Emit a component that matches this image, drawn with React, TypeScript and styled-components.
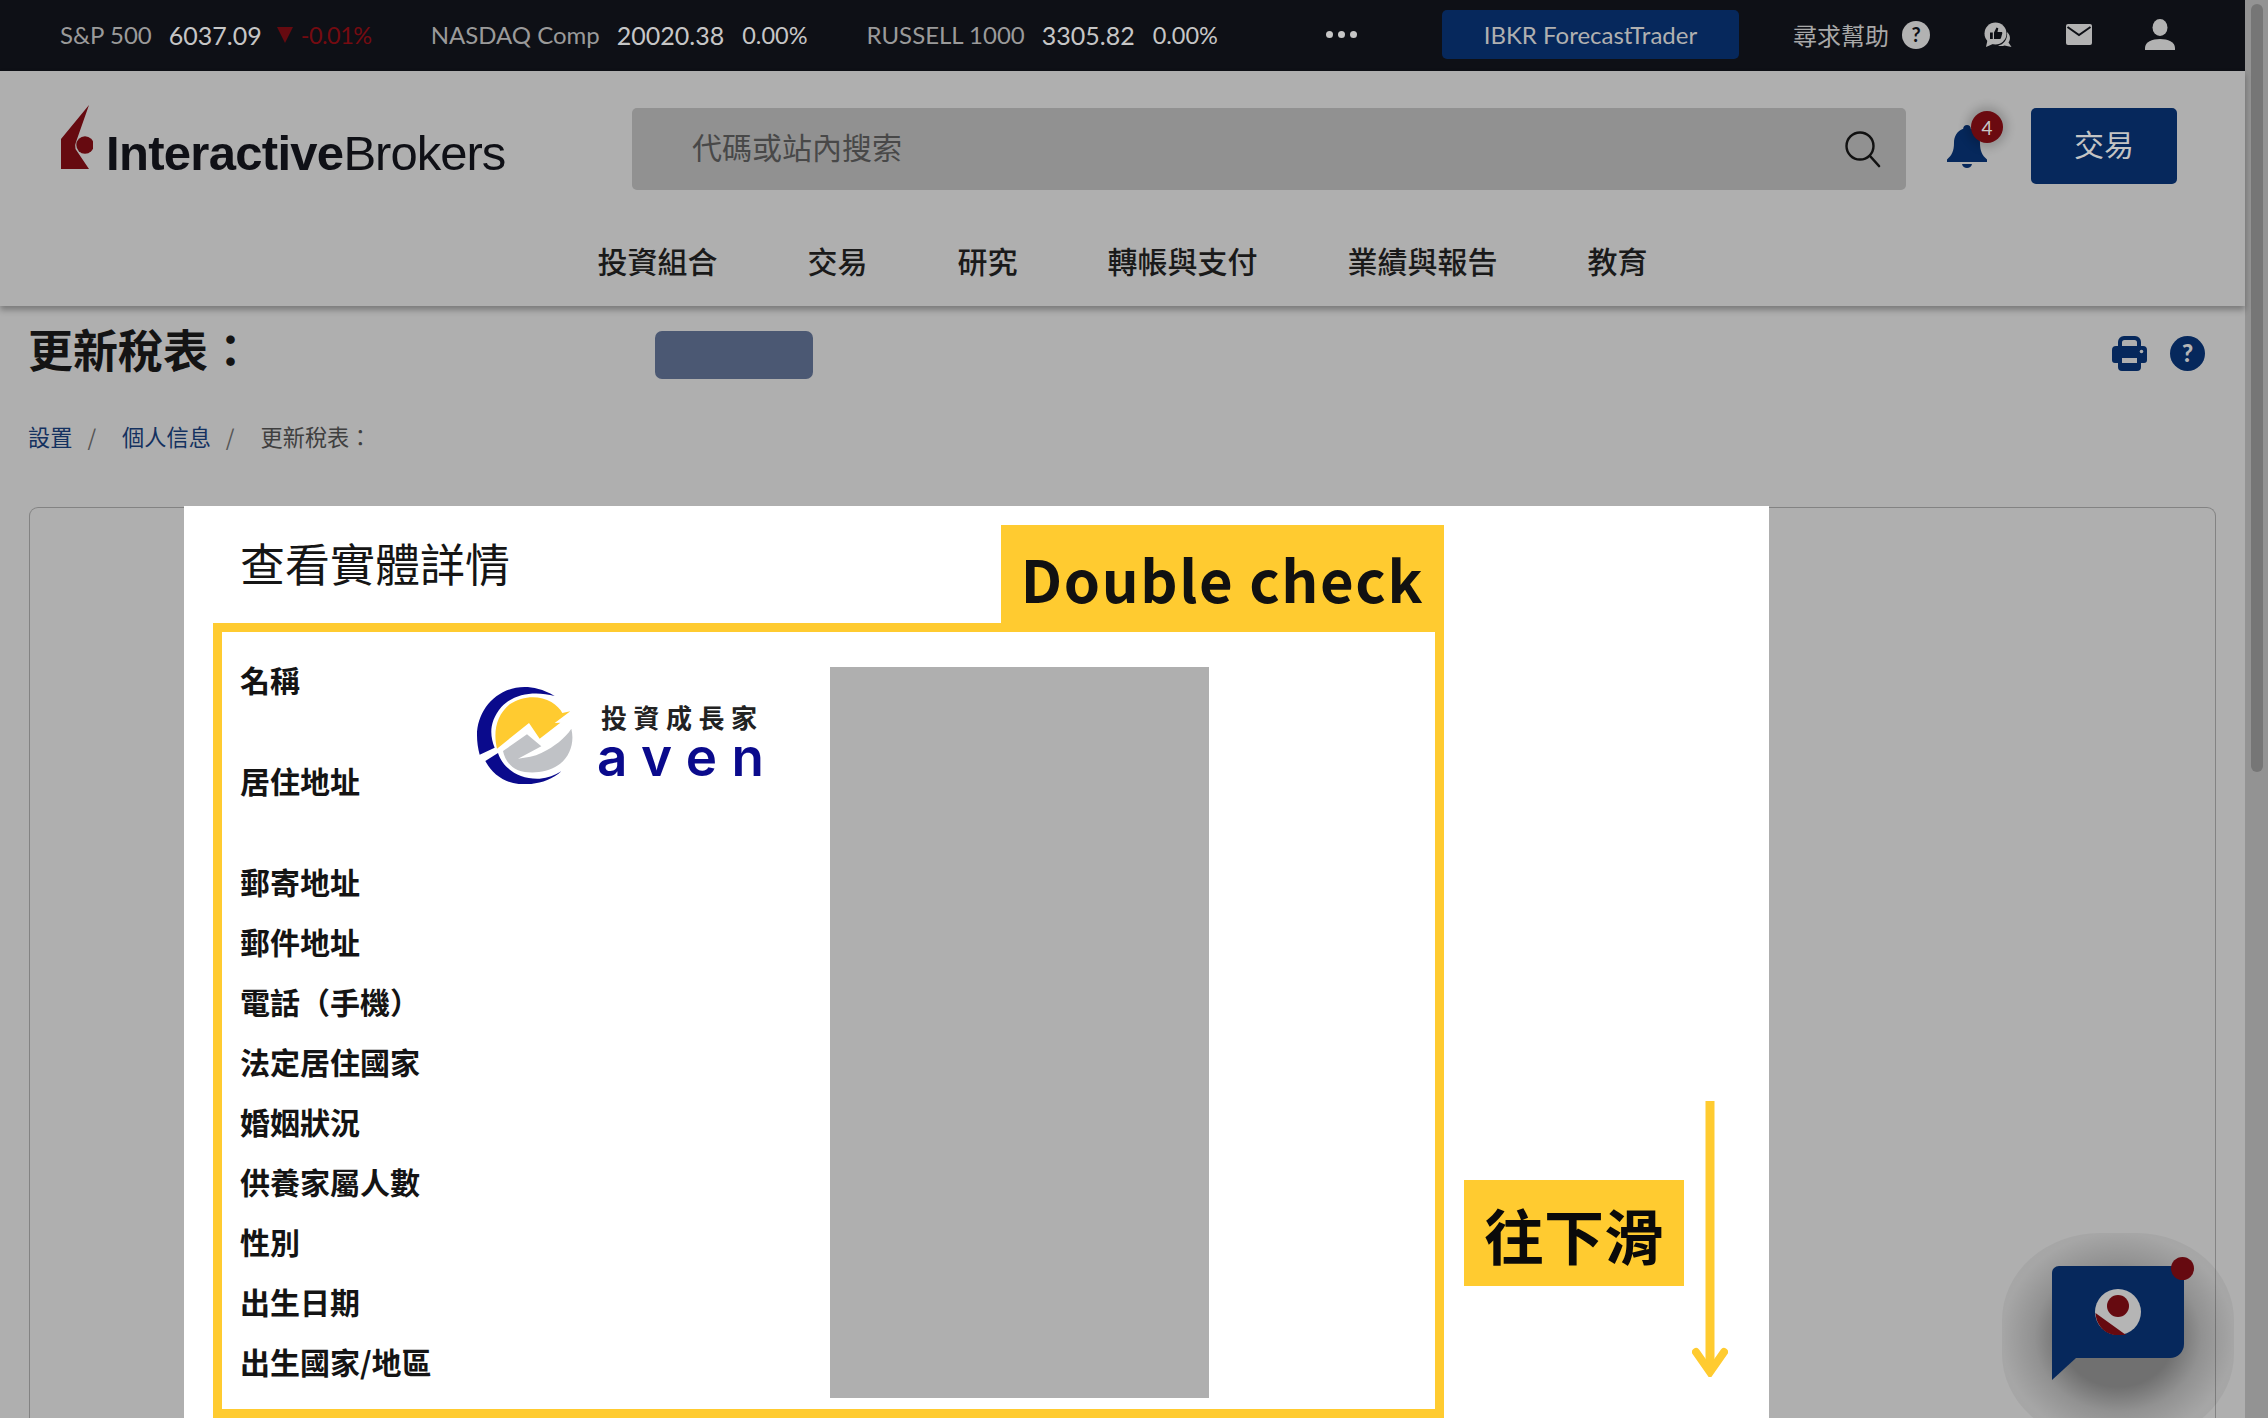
import React from 'react';
import styled, { createGlobalStyle } from 'styled-components';

const CJK = '"Noto Sans CJK TC", "Noto Sans", sans-serif';
const LATIN = 'Lato, "Noto Sans CJK TC", sans-serif';
const YELLOW = '#ffcb30';
const NAVY = '#06285c';
const DARK_RED = '#660a10';
const BAR_ICON = '#b2b2b2';
const BAR_BG = '#0e1016';

const GlobalStyle = createGlobalStyle`
  html, body {
    margin: 0;
    padding: 0;
    background: #afafaf;
    overflow: hidden;
  }
  * {
    box-sizing: border-box;
  }
`;

const Shell = styled.div`
  position: relative;
  display: flex;
  width: 2268px;
  height: 1418px;
  overflow: hidden;
  background: #afafaf;
  font-family: ${CJK};
`;

const Main = styled.div`
  display: flex;
  flex-direction: column;
  width: 2245px;
  height: 100%;
`;

const ScrollTrack = styled.div`
  width: 23px;
  height: 100%;
  padding: 4px 5px 0 6px;
  background: #939393;
`;

const ScrollThumb = styled.div`
  height: 768px;
  border-radius: 6px;
  background: #767676;
`;

const TopBar = styled.div`
  display: flex;
  align-items: center;
  height: 71px;
  padding: 0 0 2px 60px;
  background: ${BAR_BG};
  font-family: ${LATIN};
  font-size: 24px;
`;

const Ticker = styled.div`
  display: flex;
  align-items: center;
  margin-right: 59px;
`;

const TickerLabel = styled.span`
  margin-right: 17px;
  color: #9a9a9a;
`;

const TickerValue = styled.span`
  margin-right: 18px;
  color: #c6c6c6;
  font-size: 25px;
`;

const TickerChange = styled.span<{ $down?: boolean }>`
  color: ${(p) => (p.$down ? '#750b11' : '#c6c6c6')};
  font-size: 23.5px;
  letter-spacing: ${(p) => (p.$down ? '-0.5px' : '0')};
`;

const DownMark = styled.i`
  width: 0;
  height: 0;
  margin: 0 8px 0 -3px;
  border-left: 8px solid transparent;
  border-right: 8px solid transparent;
  border-top: 16px solid ${DARK_RED};
`;

const Dots = styled.div`
  display: flex;
  gap: 5px;
  margin-left: 49px;
  margin-right: 85px;
`;

const Dot = styled.i`
  width: 7px;
  height: 7px;
  border-radius: 50%;
  background: #c6c6c6;
`;

const ForecastButton = styled.div`
  display: flex;
  align-items: center;
  justify-content: center;
  width: 297px;
  height: 49px;
  border-radius: 5px;
  background: ${NAVY};
  color: #b0b0b0;
  font-size: 24px;
`;

const HelpLabel = styled.span`
  margin-left: 54px;
  color: #a8a8a8;
  font-family: ${CJK};
  font-size: 24px;
`;

const BarIcons = styled.div`
  display: flex;
  align-items: center;
  margin-left: 13px;
`;

const Header = styled.header`
  position: relative;
  height: 235px;
  padding-top: 37px;
  background: #afafaf;
  box-shadow: 0 4px 6px rgba(0, 0, 0, 0.3);
`;

const SearchRow = styled.div`
  display: flex;
  height: 82px;
  padding-left: 61px;
`;

const Logo = styled.div`
  display: flex;
  align-items: flex-end;
  width: 571px;
  height: 64px;
  margin-top: -3px;
`;

const LogoWord = styled.span<{ $bold?: boolean }>`
  color: #0f1016;
  font-family: "Liberation Sans", Arial, sans-serif;
  font-size: 49px;
  font-weight: ${(p) => (p.$bold ? 700 : 400)};
  letter-spacing: ${(p) => (p.$bold ? '-0.7px' : '-1px')};
  line-height: 46px;
`;

const LogoText = styled.div`
  margin: 0 0 -7px 13px;
  white-space: nowrap;
`;

const SearchBox = styled.div`
  display: flex;
  align-items: center;
  justify-content: space-between;
  width: 1274px;
  height: 82px;
  padding: 0 24px 0 60px;
  border-radius: 5px;
  background: #919191;
  color: #484848;
  font-size: 30px;
`;

const SearchHint = styled.span`
  margin-bottom: 6px;
`;

const BellWrap = styled.div`
  position: relative;
  width: 40px;
  height: 43px;
  margin: 17px 0 0 41px;
`;

const BellBadge = styled.span`
  position: absolute;
  left: 24px;
  top: -14px;
  display: flex;
  align-items: center;
  justify-content: center;
  width: 32px;
  height: 32px;
  border-radius: 50%;
  background: #6b0a10;
  box-shadow: 0 0 8px 5px rgba(0, 0, 0, 0.16);
  color: #c8c8c8;
  font-family: ${LATIN};
  font-size: 19px;
`;

const TradeButton = styled.div`
  display: flex;
  align-items: center;
  justify-content: center;
  width: 146px;
  height: 76px;
  margin-left: 44px;
  padding-bottom: 7px;
  border-radius: 5px;
  background: ${NAVY};
  color: #c4c4c4;
  font-size: 30px;
`;

const Nav = styled.nav`
  display: flex;
  align-items: center;
  justify-content: center;
  gap: 90px;
  height: 87px;
  margin-top: 29px;
  padding-bottom: 6px;
`;

const NavItem = styled.span`
  color: #1a1a1a;
  font-size: 30px;
  font-weight: 500;
  white-space: nowrap;
`;

const PageTop = styled.div`
  display: flex;
  align-items: center;
  height: 88px;
  padding: 0 40px 0 28px;
`;

const PageTitle = styled.h1`
  width: 627px;
  margin: 0 0 3px;
  color: #141414;
  font-size: 45px;
  font-weight: 700;
`;

const GhostButton = styled.div`
  width: 158px;
  height: 48px;
  margin-top: 10px;
  border-radius: 7px;
  background: #4b5873;
`;

const PageIcons = styled.div`
  display: flex;
  align-items: center;
  gap: 23px;
  margin: 6px 0 0 auto;
`;

const Breadcrumbs = styled.div`
  display: flex;
  align-items: center;
  height: 40px;
  margin-top: 22px;
  padding-left: 28px;
  font-size: 22.2px;
`;

const Crumb = styled.span<{ $current?: boolean }>`
  color: ${(p) => (p.$current ? '#3f3f3f' : '#14315f')};
`;

const CrumbSlash = styled.span`
  margin: 0 26px 0 15px;
  color: #555;
`;

const Card = styled.div`
  flex: 1;
  margin: 51px 29px 0;
  border: 1px solid #838383;
  border-bottom: none;
  border-radius: 9px 9px 0 0;
`;

const Modal = styled.div`
  position: absolute;
  left: 184px;
  top: 506px;
  width: 1585px;
  height: 912px;
  overflow: hidden;
  background: #fff;
`;

const ModalTitle = styled.div`
  display: flex;
  align-items: center;
  height: 117px;
  padding: 0 0 5px 56px;
  color: #151515;
  font-size: 45px;
`;

const DoubleCheckTag = styled.div`
  position: absolute;
  left: 817px;
  top: 19px;
  display: flex;
  align-items: center;
  justify-content: center;
  width: 443px;
  height: 100px;
  padding-top: 5px;
  background: ${YELLOW};
  color: #111;
  font-size: 58px;
  font-weight: 700;
  letter-spacing: 1.6px;
  white-space: nowrap;
`;

const HighlightBox = styled.div`
  position: relative;
  width: 1231px;
  height: 795px;
  margin-left: 29px;
  padding: 18px 0 0 18px;
  border: 9px solid ${YELLOW};
`;

const DetailRow = styled.div<{ $tall?: boolean }>`
  height: ${(p) => (p.$tall ? 101 : 60)}px;
  color: #141414;
  font-size: 30px;
  font-weight: 700;
  line-height: 58px;
`;

const BrandMark = styled.div`
  position: absolute;
  left: 255px;
  top: 55px;
  display: flex;
  align-items: center;
`;

const BrandText = styled.div`
  display: flex;
  flex-direction: column;
  margin: 6px 0 0 28px;
`;

const BrandSlogan = styled.span`
  color: #222;
  font-size: 26px;
  font-weight: 700;
  letter-spacing: 6.5px;
  line-height: 38px;
  white-space: nowrap;
`;

const BrandName = styled.span`
  margin: -2px 0 0 -4px;
  color: #0a0a8c;
  font-family: Inter, sans-serif;
  font-size: 53px;
  font-weight: 600;
  letter-spacing: 14.5px;
  line-height: 46px;
`;

const RedactionBlock = styled.div`
  position: absolute;
  left: 608px;
  top: 35px;
  width: 379px;
  height: 731px;
  background: #afafaf;
`;

const ScrollHint = styled.div`
  position: absolute;
  left: 1280px;
  top: 674px;
  display: flex;
  align-items: center;
  justify-content: center;
  width: 220px;
  height: 106px;
  background: ${YELLOW};
  color: #0a0a0a;
  font-size: 60px;
  font-weight: 700;
`;

const ScrollArrow = styled.svg`
  position: absolute;
  left: 1508px;
  top: 595px;
`;

const ChatHalo = styled.div`
  position: absolute;
  left: 2002px;
  top: 1233px;
  width: 232px;
  height: 208px;
  border-radius: 42%;
  background: radial-gradient(
    closest-side,
    rgba(0, 0, 0, 0.36) 48%,
    rgba(0, 0, 0, 0.17) 72%,
    rgba(0, 0, 0, 0.05) 100%
  );
`;

const ChatWidget = styled.div`
  position: absolute;
  left: 2052px;
  top: 1266px;
  width: 132px;
  height: 92px;
  border-radius: 7px 7px 14px 0;
  background: ${NAVY};
`;

const ChatTail = styled.svg`
  position: absolute;
  left: 0;
  top: 92px;
`;

const ChatGlyph = styled.svg`
  position: absolute;
  left: 43px;
  top: 23px;
`;

const ChatDot = styled.i`
  position: absolute;
  left: 119px;
  top: -9px;
  width: 23px;
  height: 23px;
  border-radius: 50%;
  background: ${DARK_RED};
`;

const tickers = [
  { label: 'S&P 500', value: '6037.09', change: '-0.01%', down: true },
  { label: 'NASDAQ Comp', value: '20020.38', change: '0.00%' },
  { label: 'RUSSELL 1000', value: '3305.82', change: '0.00%' },
];

const navItems = ['投資組合', '交易', '研究', '轉帳與支付', '業績與報告', '教育'];

const details = [
  { label: '名稱', tall: true },
  { label: '居住地址', tall: true },
  { label: '郵寄地址' },
  { label: '郵件地址' },
  { label: '電話（手機）' },
  { label: '法定居住國家' },
  { label: '婚姻狀況' },
  { label: '供養家屬人數' },
  { label: '性別' },
  { label: '出生日期' },
  { label: '出生國家/地區' },
];

function IbMark(): JSX.Element {
  return (
    <svg width="32" height="64" viewBox="0 0 32 64">
      <path d="M28 0 L0 34 V64 H28 L14.5 44 A9.5 9.5 0 0 1 15 37 Z" fill={DARK_RED} />
      <circle cx="24" cy="40" r="8.7" fill={DARK_RED} />
    </svg>
  );
}

function AvenMark(): JSX.Element {
  return (
    <svg width="96" height="97" viewBox="112 80 288 291">
      <path
        d="M345 107 C310 86 280 80 255 80 C170 80 112 150 112 225 C112 245 115 265 120 283 L165 262 C150 225 148 185 185 140 C225 97 290 92 345 107 Z"
        fill="#0a0a8c"
      />
      <path
        d="M137 302 L175 278 C190 325 240 358 300 355 C325 353 345 345 365 333 C335 360 295 372 255 372 C200 372 160 345 137 302 Z"
        fill="#0a0a8c"
      />
      <path
        d="M172 265 C160 215 170 165 210 132 C250 105 300 105 335 125 C350 134 362 146 368 158 L392 153 L345 188 L362 187 L300 235 L268 188 Z"
        fill={YELLOW}
      />
      <path
        d="M190 272 L262 222 L305 258 L235 295 C260 292 285 288 305 278 C345 258 375 235 395 205 C405 245 392 290 355 315 C320 338 270 342 235 330 C212 320 195 298 190 272 Z"
        fill="#c0c2c6"
      />
    </svg>
  );
}

function App(): JSX.Element {
  return (
    <Shell>
      <GlobalStyle />
      <Main>
        <TopBar>
          {tickers.map((t) => (
            <Ticker key={t.label}>
              <TickerLabel>{t.label}</TickerLabel>
              <TickerValue>{t.value}</TickerValue>
              {t.down && <DownMark />}
              <TickerChange $down={t.down}>{t.change}</TickerChange>
            </Ticker>
          ))}
          <Dots>
            <Dot />
            <Dot />
            <Dot />
          </Dots>
          <ForecastButton>IBKR ForecastTrader</ForecastButton>
          <HelpLabel>尋求幫助</HelpLabel>
          <BarIcons>
            <svg width="28" height="28" viewBox="0 0 28 28">
              <circle cx="14" cy="14" r="14" fill={BAR_ICON} />
              <text x="14" y="21" textAnchor="middle" fontSize="20" fontWeight="700" fontFamily="Lato" fill={BAR_BG}>
                ?
              </text>
            </svg>
            <svg width="28" height="26" viewBox="0 0 28 26" style={{ marginLeft: 54 }}>
              <circle cx="11.500" cy="11.500" r="11" fill={BAR_ICON} />
              <path d="M3.500 18l-1.500 7 8-3.500z" fill={BAR_ICON} />
              <path
                d="M6 10.500h2.800v6.500H6z M10 10.500l2.500-5 1.800.8-.8 3.700h3.800c.8 0 1.200.6 1 1.300l-1.300 4.700c-.2.600-.6 1-1.300 1H10z"
                fill={BAR_BG}
              />
              <path d="M23 10c3.500 3 3.800 7.500 1.500 10.500L27.500 25l-7-1.500c-2 .8-4.500.8-6.500 0 5.500-.5 10-6.500 9-13.500z" fill={BAR_ICON} />
            </svg>
            <svg width="26" height="21" viewBox="0 0 26 21" style={{ marginLeft: 54 }}>
              <rect width="26" height="21" rx="2" fill={BAR_ICON} />
              <path d="M1.500 3l11.500 8L24.500 3" fill="none" stroke={BAR_BG} strokeWidth="2" />
            </svg>
            <svg width="30" height="32" viewBox="0 0 30 32" style={{ marginLeft: 53 }}>
              <ellipse cx="15" cy="8.500" rx="7.500" ry="8.500" fill={BAR_ICON} />
              <path d="M0 31v-2c0-6 7-9 15-9s15 3 15 9v2z" fill={BAR_ICON} />
            </svg>
          </BarIcons>
        </TopBar>

        <Header>
          <SearchRow>
            <Logo>
              <IbMark />
              <LogoText>
                <LogoWord $bold>Interactive</LogoWord>
                <LogoWord>Brokers</LogoWord>
              </LogoText>
            </Logo>
            <SearchBox>
              <SearchHint>代碼或站內搜索</SearchHint>
              <svg width="38" height="38" viewBox="0 0 38 38">
                <circle cx="16" cy="16" r="13.500" fill="none" stroke="#111" strokeWidth="2.400" />
                <path d="M26 26l9 10" stroke="#111" strokeWidth="2.600" strokeLinecap="round" />
              </svg>
            </SearchBox>
            <BellWrap>
              <svg width="40" height="43" viewBox="0 0 40 43">
                <path
                  d="M20 0c2.200 0 3.800 1.700 3.800 3.800C30 6 33 11.500 33 18c0 8 2 12 7 16.500V37H0v-2.500C5 30 7 26 7 18 7 11.500 10 6 16.200 3.800 16.200 1.700 17.800 0 20 0z"
                  fill={NAVY}
                />
                <path d="M15 39h10c-.5 2.500-2.500 4-5 4s-4.500-1.500-5-4z" fill={NAVY} />
              </svg>
              <BellBadge>4</BellBadge>
            </BellWrap>
            <TradeButton>交易</TradeButton>
          </SearchRow>
          <Nav>
            {navItems.map((item) => (
              <NavItem key={item}>{item}</NavItem>
            ))}
          </Nav>
        </Header>

        <PageTop>
          <PageTitle>更新稅表：</PageTitle>
          <GhostButton />
          <PageIcons>
            <svg width="35" height="35" viewBox="0 0 35 35">
              <path d="M6 13V6a6 6 0 0 1 6-6h11a6 6 0 0 1 6 6v7h-4V6.500a2.500 2.500 0 0 0-2.500-2.500h-10A2.500 2.500 0 0 0 10 6.500V13z" fill={NAVY} />
              <path
                d="M4 10h27a4 4 0 0 1 4 4v10a3 3 0 0 1-3 3h-3v4a4 4 0 0 1-4 4H10a4 4 0 0 1-4-4v-4H3a3 3 0 0 1-3-3V14a4 4 0 0 1 4-4z"
                fill={NAVY}
              />
              <rect x="10" y="22" width="15" height="5" fill="#afafaf" />
              <circle cx="29.500" cy="15.500" r="1.800" fill="#afafaf" />
            </svg>
            <svg width="35" height="35" viewBox="0 0 35 35">
              <circle cx="17.500" cy="17.500" r="17.500" fill={NAVY} />
              <text x="17.500" y="26" textAnchor="middle" fontSize="24" fontWeight="900" fontFamily="Lato" fill="#b5b5b5">
                ?
              </text>
            </svg>
          </PageIcons>
        </PageTop>

        <Breadcrumbs>
          <Crumb>設置</Crumb>
          <CrumbSlash>/</CrumbSlash>
          <Crumb>個人信息</Crumb>
          <CrumbSlash>/</CrumbSlash>
          <Crumb $current>更新稅表：</Crumb>
        </Breadcrumbs>

        <Card />
      </Main>
      <ScrollTrack>
        <ScrollThumb />
      </ScrollTrack>

      <Modal>
        <ModalTitle>查看實體詳情</ModalTitle>
        <DoubleCheckTag>Double check</DoubleCheckTag>
        <HighlightBox>
          {details.map((d) => (
            <DetailRow key={d.label} $tall={d.tall}>
              {d.label}
            </DetailRow>
          ))}
          <BrandMark>
            <AvenMark />
            <BrandText>
              <BrandSlogan>投資成長家</BrandSlogan>
              <BrandName>aven</BrandName>
            </BrandText>
          </BrandMark>
          <RedactionBlock />
        </HighlightBox>
        <ScrollHint>往下滑</ScrollHint>
        <ScrollArrow width="36" height="276" viewBox="0 0 36 276">
          <rect x="13.500" y="0" width="9" height="270" fill={YELLOW} />
          <path d="M4 251 L18 271 L32 251" fill="none" stroke={YELLOW} strokeWidth="8" strokeLinecap="round" />
        </ScrollArrow>
      </Modal>

      <ChatHalo />
      <ChatWidget>
        <ChatTail width="24" height="22" viewBox="0 0 24 22">
          <path d="M0 0H24L0 22z" fill={NAVY} />
        </ChatTail>
        <ChatGlyph width="46" height="46" viewBox="0 0 46 46">
          <circle cx="23" cy="23" r="23" fill="#b5b5b5" />
          <path d="M0.500 24 L31 46 Q27 47 23 46.500 C10 46 1 36 0.500 24z" fill={DARK_RED} />
          <circle cx="23" cy="17" r="11" fill={DARK_RED} />
        </ChatGlyph>
        <ChatDot />
      </ChatWidget>
    </Shell>
  );
}

export default App;
